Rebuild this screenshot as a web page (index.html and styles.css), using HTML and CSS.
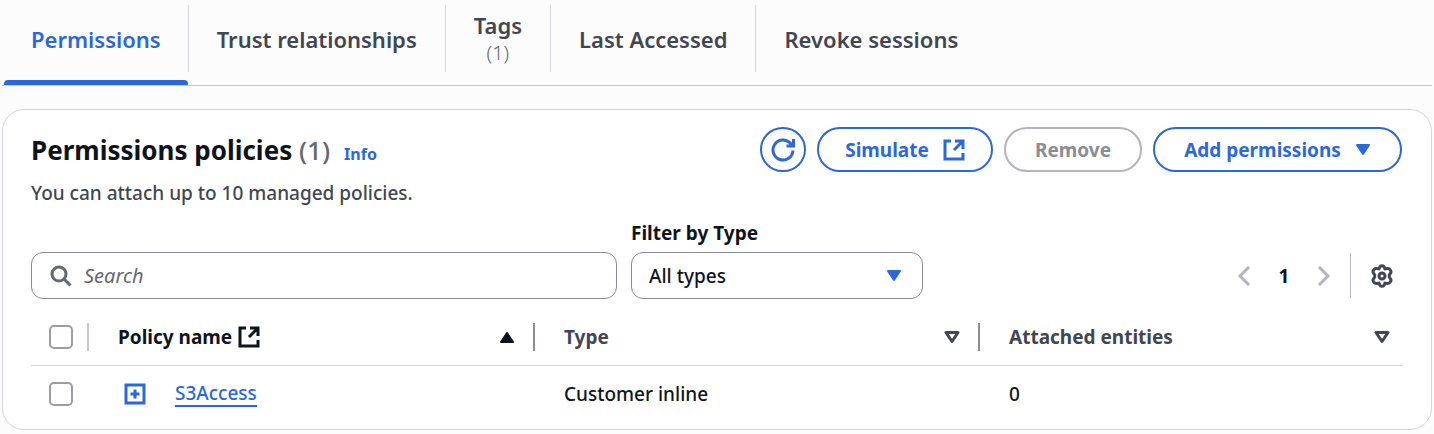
FILE: index.html
```html
<!DOCTYPE html>
<html lang="en">
<head>
<meta charset="utf-8">
<meta name="viewport" content="width=device-width, initial-scale=1">
<title>Permissions policies</title>
<link rel="stylesheet" href="styles.css">
</head>
<body>
<nav class="tabs" role="tablist" aria-label="Role details">
  <button class="tab tab-active" role="tab" aria-selected="true">Permissions</button>
  <button class="tab" role="tab">Trust relationships</button>
  <button class="tab" role="tab">Tags<span class="tab-count">(1)</span></button>
  <button class="tab" role="tab">Last Accessed</button>
  <button class="tab" role="tab">Revoke sessions</button>
</nav>
<main class="panel">
  <header class="panel-header">
    <div class="heading">
      <h2 class="title">Permissions policies <span class="count">(1)</span><a class="info" href="#">Info</a></h2>
      <p class="description">You can attach up to 10 managed policies.</p>
    </div>
    <div class="actions">
      <button class="btn btn-round" aria-label="Refresh">
        <svg class="icon-refresh" viewBox="0 0 24 24" aria-hidden="true"><path d="M22 12.500a10 10 0 1 1-2.800-7.500L21.500 7.500M22.500 1v7H15.500"/></svg>
      </button>
      <button class="btn btn-simulate">Simulate
        <svg class="icon-external" viewBox="0 0 22 22" aria-hidden="true"><path d="M8 2H2v18h18v-6M12 2h8v8M20 2l-9 9"/></svg>
      </button>
      <button class="btn btn-remove" disabled>Remove</button>
      <button class="btn btn-add">Add permissions
        <svg class="icon-caret" viewBox="0 0 16 14" aria-hidden="true"><path d="M2 2h12L8 11z"/></svg>
      </button>
    </div>
  </header>
  <div class="tools">
    <div class="search">
      <svg class="icon-search" viewBox="0 0 22 22" aria-hidden="true"><circle cx="9" cy="9" r="7"/><path d="M14 14l6.500 6.500"/></svg>
      <input class="search-input" type="search" placeholder="Search" aria-label="Search policies">
    </div>
    <div class="filter">
      <label class="filter-label" for="type-filter">Filter by Type</label>
      <div class="select-wrap">
        <select class="select" id="type-filter"><option>All types</option></select>
        <svg class="icon-caret" viewBox="0 0 16 14" aria-hidden="true"><path d="M2 2h12L8 11z"/></svg>
      </div>
    </div>
    <div class="pager">
      <button class="page-btn" aria-label="Previous page" disabled><svg class="icon-chevron" viewBox="0 0 12 20" aria-hidden="true"><path d="M11 1l-9 9 9 9"/></svg></button>
      <button class="page-number" aria-current="page">1</button>
      <button class="page-btn" aria-label="Next page" disabled><svg class="icon-chevron" viewBox="0 0 12 20" aria-hidden="true"><path d="M1 1l9 9-9 9"/></svg></button>
      <button class="settings" aria-label="Preferences">
        <svg class="icon-gear" viewBox="0 0 24 24" aria-hidden="true"><path d="M9.600 3.500Q10 1.700 12 1.700T14.400 3.500L15 4.900L17.200 4.600Q19.400 4.300 20.500 6.200T20.300 9.400L19.300 11V13L20.300 14.600Q21.600 16 20.500 17.800T17.200 19.400L15 19.100L14.400 20.500Q14 22.300 12 22.300T9.600 20.500L9 19.100L6.800 19.400Q4.600 19.700 3.500 17.800T3.700 14.600L4.700 13V11L3.700 9.400Q2.400 8 3.500 6.200T6.800 4.600L9 4.900Z"/><circle cx="12" cy="12" r="3"/></svg>
      </button>
    </div>
  </div>
  <table class="table">
    <colgroup><col class="col-check"><col class="col-name"><col class="col-type"><col class="col-entities"></colgroup>
    <thead>
      <tr>
        <th scope="col" class="check-cell"><div class="head-cell divider divider-light"><input class="checkbox" type="checkbox" aria-label="Select all policies"></div></th>
        <th scope="col"><div class="head-cell divider head-sorted"><span class="head-label">Policy name
          <svg class="icon-external" viewBox="0 0 22 22" aria-hidden="true"><path d="M8 2H2v18h18v-6M12 2h8v8M20 2l-9 9"/></svg></span>
          <svg class="icon-sort icon-sort-filled" viewBox="0 0 16 14" aria-hidden="true"><path d="M2 12h12L8 3z"/></svg></div></th>
        <th scope="col"><div class="head-cell divider"><span class="head-label">Type</span>
          <svg class="icon-sort" viewBox="0 0 16 14" aria-hidden="true"><path d="M2 2.500h12L8 11.500z"/></svg></div></th>
        <th scope="col"><div class="head-cell"><span class="head-label">Attached entities</span>
          <svg class="icon-sort" viewBox="0 0 16 14" aria-hidden="true"><path d="M2 2.500h12L8 11.500z"/></svg></div></th>
      </tr>
    </thead>
    <tbody>
      <tr>
        <td class="check-cell"><div class="body-cell"><input class="checkbox" type="checkbox" aria-label="Select S3Access"></div></td>
        <td><div class="body-cell name-cell"><button class="expand" aria-label="Expand S3Access"><svg class="icon-expand" viewBox="0 0 22 22" aria-hidden="true"><path d="M2 2h18v18H2zM11 6.500v9M6.500 11h9"/></svg></button><a class="policy-link" href="#">S3Access</a></div></td>
        <td><div class="body-cell">Customer inline</div></td>
        <td><div class="body-cell">0</div></td>
      </tr>
    </tbody>
  </table>
</main>
</body>
</html>
```
FILE: styles.css
```css
* { box-sizing: border-box; }

body {
  margin: 0;
  padding: 0 2px 4px;
  background: #fcfcfd;
  color: #0f141a;
  font: 500 19px/28px "Noto Sans", "Open Sans", sans-serif;
}

button, input, select { font: inherit; color: inherit; }
button { margin: 0; padding: 0; border: 0; background: none; }
a { color: #2b68d8; text-decoration: none; }
svg { display: block; flex: none; fill: none; stroke: currentColor; stroke-width: 3; }

.tabs {
  display: flex;
  height: 86px;
  padding: 5px 2px 0;
  border-bottom: 1px solid #c6c6cd;
}

.tab {
  position: relative;
  display: flex;
  flex-direction: column;
  align-items: center;
  justify-content: center;
  height: 67px;
  padding: 0 28px;
  border-right: 1px solid #d5d5db;
  color: #424650;
  font-size: 22px;
  font-weight: 600;
}

.tab:first-child { padding: 0 27px; }
.tab:last-child { border-right: 0; }
.tab-count { color: #656871; font-size: 20px; font-weight: 300; }
.tab-active { color: #2b68d8; }

.tab-active::after {
  content: "";
  position: absolute;
  right: 0;
  bottom: -13px;
  left: 0;
  height: 5px;
  border-radius: 4px 4px 0 0;
  background: #2b68d8;
}

.panel {
  margin-top: 23px;
  padding: 17px 29px 7px 28px;
  border: 1px solid #d5d5db;
  border-radius: 22px;
  background: #fff;
}

.panel-header { display: flex; justify-content: space-between; }
.title { margin: 0; font-size: 26px; line-height: 46px; font-weight: 700; }
.count { color: #656871; font-weight: 500; }
.info { margin-left: 14px; font-size: 16px; font-weight: 700; }
.description { margin: 2px 0 0; color: #424650; }

.actions { display: flex; gap: 11px; }

.btn {
  display: flex;
  align-items: center;
  justify-content: center;
  gap: 14px;
  height: 45px;
  padding: 0 20px;
  border: 2px solid #2b68d8;
  border-radius: 23px;
  color: #2b68d8;
  font-weight: 700;
  white-space: nowrap;
}

.btn-round { width: 46px; padding: 0; }
.btn-simulate { min-width: 176px; }
.btn-remove { min-width: 138px; border-color: #b4b4bb; color: #8c8c94; }
.btn-add { min-width: 249px; }

.icon-refresh { width: 24px; height: 24px; }
.icon-external { width: 22px; height: 22px; }
.icon-caret { width: 16px; height: 14px; color: #2b68d8; fill: currentColor; stroke-width: 2; stroke-linejoin: round; }

.tools { display: flex; align-items: flex-end; gap: 14px; margin-top: 12px; }

.search {
  display: flex;
  flex: 0 1 586px;
  align-items: center;
  gap: 12px;
  height: 47px;
  padding: 0 18px;
  border: 1px solid #8c8c94;
  border-radius: 12px;
}

.icon-search { width: 22px; height: 22px; color: #656871; }
.search-input { flex: 1; min-width: 0; padding: 0; border: 0; outline: 0; background: none; font-size: 20px; font-weight: 400; }
.search-input::placeholder { color: #656871; font-style: italic; opacity: 1; }

.filter { flex: 0 1 292px; }
.filter-label { display: block; margin-bottom: 5px; font-weight: 700; }
.select-wrap { display: grid; align-items: center; }
.select-wrap > * { grid-area: 1 / 1; }

.select {
  width: 100%;
  height: 47px;
  padding: 0 48px 0 17px;
  border: 1px solid #8c8c94;
  border-radius: 12px;
  background: #fff;
  appearance: none;
}

.select-wrap .icon-caret { justify-self: end; margin-right: 21px; pointer-events: none; }

.pager { display: flex; align-items: center; gap: 28px; height: 47px; margin-left: auto; }
.icon-chevron { width: 12px; height: 20px; color: #b4b4bb; }
.page-number { width: 12px; font-weight: 700; }
.settings { display: flex; align-items: center; justify-content: flex-end; width: 52px; height: 45px; margin-left: -8px; padding-right: 8px; border-left: 1px solid #b4b4bb; }
.icon-gear { width: 24px; height: 24px; color: #424650; }

.table { width: 100%; margin-top: 10px; border-collapse: collapse; table-layout: fixed; text-align: left; }
.table th, .table td { padding: 0; }
.table th { color: #424650; font-weight: 700; }
.table thead tr { border-bottom: 1px solid #d5d5db; }
.col-check { width: 58px; }
.col-name { width: 446px; }
.col-type { width: 445px; }

.head-cell { display: flex; align-items: center; justify-content: space-between; height: 28px; margin: 14px 0; padding: 0 12px 0 29px; }
.divider { padding-right: 18px; border-right: 2px solid #8c8c94; }
.divider-light { border-color: #c6c6cd; }
.head-label { display: flex; align-items: center; gap: 6px; }
.head-sorted { color: #0f141a; }
.icon-sort { width: 16px; height: 14px; stroke-width: 3; stroke-linejoin: round; }
.icon-sort-filled { fill: currentColor; stroke-width: 2; }

.body-cell { display: flex; align-items: center; height: 56px; padding-left: 29px; }
.table .check-cell .head-cell, .table .check-cell .body-cell { padding-right: 0; padding-left: 18px; }

.checkbox {
  flex: none;
  width: 24px;
  height: 24px;
  margin: 0;
  border: 2px solid #9c9ca4;
  border-radius: 5px;
  background: #fff;
  appearance: none;
}

.name-cell { gap: 29px; }
.expand { margin-left: 6px; color: #2b68d8; }
.icon-expand { width: 22px; height: 22px; }
.policy-link { border-bottom: 2px solid #2b68d8; line-height: 24px; }
```
